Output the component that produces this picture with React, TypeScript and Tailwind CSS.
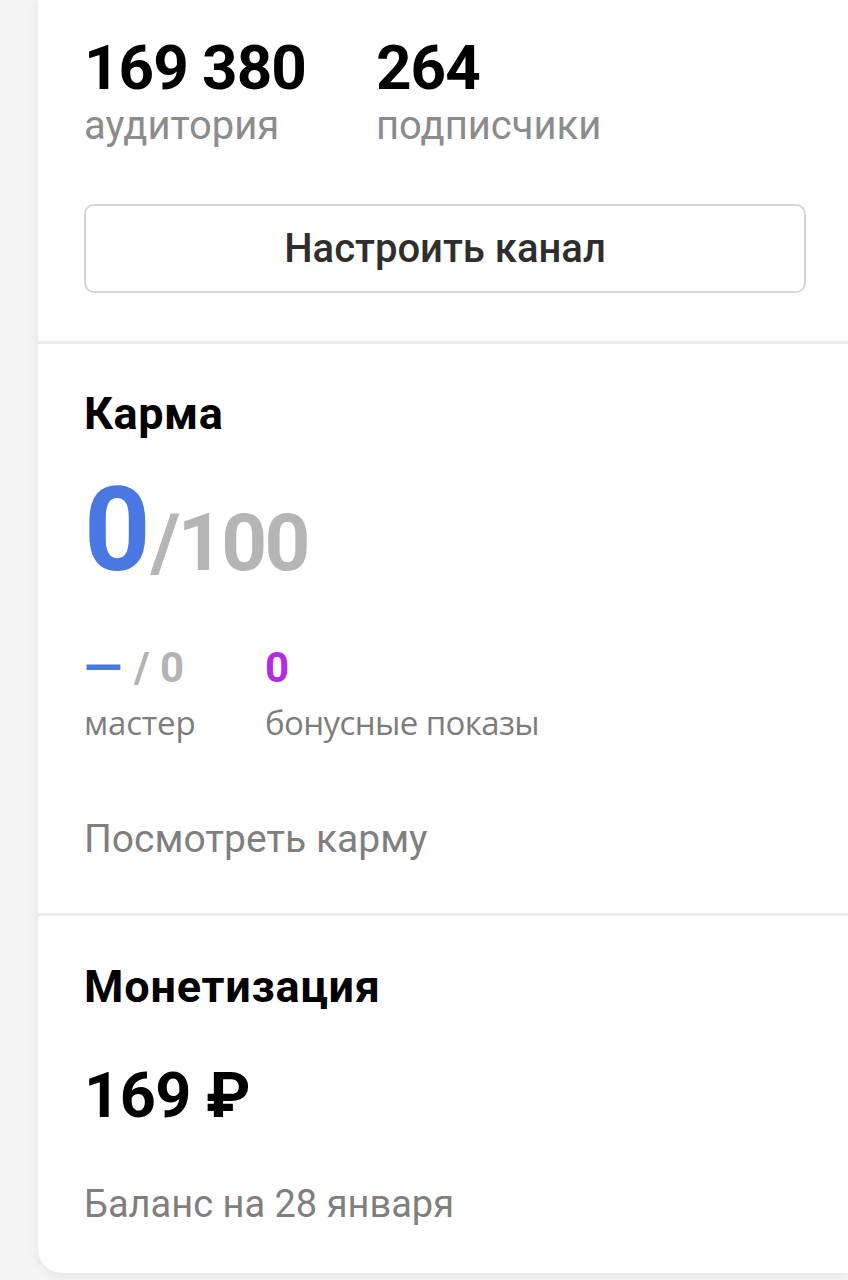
import React from "react";

export default function App() {
  return (
    <div className="min-h-[1280px] bg-[#f4f4f4] pl-[38px] pb-[7px]" style={{ fontFamily: "Roboto, 'Noto Sans', sans-serif" }}>
      <div className="bg-white rounded-bl-[24px] shadow-[0_2px_12px_rgba(0,0,0,0.07)]">
        {/* Stats */}
        <div className="pl-[46px] pr-[42px] pt-[37px] pb-[48px]">
          <div className="flex">
            <div className="w-[292px]">
              <div className="text-[62px] leading-none font-bold text-black tracking-[-1px]">169 380</div>
              <div className="mt-[7px] text-[40px] leading-none text-[#8c8c8c]">аудитория</div>
            </div>
            <div>
              <div className="text-[62px] leading-none font-bold text-black tracking-[-1px]">264</div>
              <div className="mt-[7px] text-[40px] leading-none text-[#8c8c8c]">подписчики</div>
            </div>
          </div>
          <button className="mt-[58px] w-full h-[89px] rounded-[10px] border-2 border-[#d6d6d6] bg-white flex items-center justify-center text-[40px] font-medium text-[#2e2e2e]">
            Настроить канал
          </button>
        </div>

        <div className="h-[3px] bg-[#ebebeb]" />

        {/* Karma */}
        <div className="pl-[46px] pt-[47px] pb-[54px]">
          <div className="text-[45px] leading-none font-bold text-black tracking-[0.5px]">Карма</div>
          <div className="mt-[36px] flex items-baseline leading-none">
            <span className="text-[116px] font-bold text-[#4a78e3]">0</span>
            <span className="text-[80px] font-bold text-[#b5b5b5] tracking-[-2.5px]">/100</span>
          </div>
          <div className="mt-[59px] flex">
            <div className="w-[181px]">
              <div className="flex items-baseline h-[42px] text-[42px] leading-none font-bold text-[#b3b3b3]">
                <span className="text-[50px] leading-[36px] text-[#4a78e3] translate-y-[3px]">—</span>
                <span className="ml-[12px]">/ 0</span>
              </div>
              <div className="mt-[17px] text-[33px] leading-none text-[#7d7d7d] tracking-[-0.2px]" style={{ fontFamily: "'Open Sans', 'Noto Sans', sans-serif" }}>мастер</div>
            </div>
            <div>
              <div className="text-[42px] leading-none font-bold text-[#b52ce0]">0</div>
              <div className="mt-[17px] text-[33px] leading-none text-[#7d7d7d] tracking-[-0.6px]" style={{ fontFamily: "'Open Sans', 'Noto Sans', sans-serif" }}>бонусные показы</div>
            </div>
          </div>
          <div className="mt-[81px] text-[39px] leading-none text-[#7f7f7f]">Посмотреть карму</div>
        </div>

        <div className="h-[3px] bg-[#ebebeb]" />

        {/* Monetization */}
        <div className="pl-[46px] pt-[48px] pb-[50px]">
          <div className="text-[45px] leading-none font-bold text-black tracking-[0.8px]">Монетизация</div>
          <div className="mt-[55px] text-[63px] leading-none font-bold text-black tracking-[-0.5px]">169 ₽</div>
          <div className="mt-[58px] text-[38px] leading-none text-[#7f7f7f]">Баланс на 28 января</div>
        </div>
      </div>
    </div>
  );
}
